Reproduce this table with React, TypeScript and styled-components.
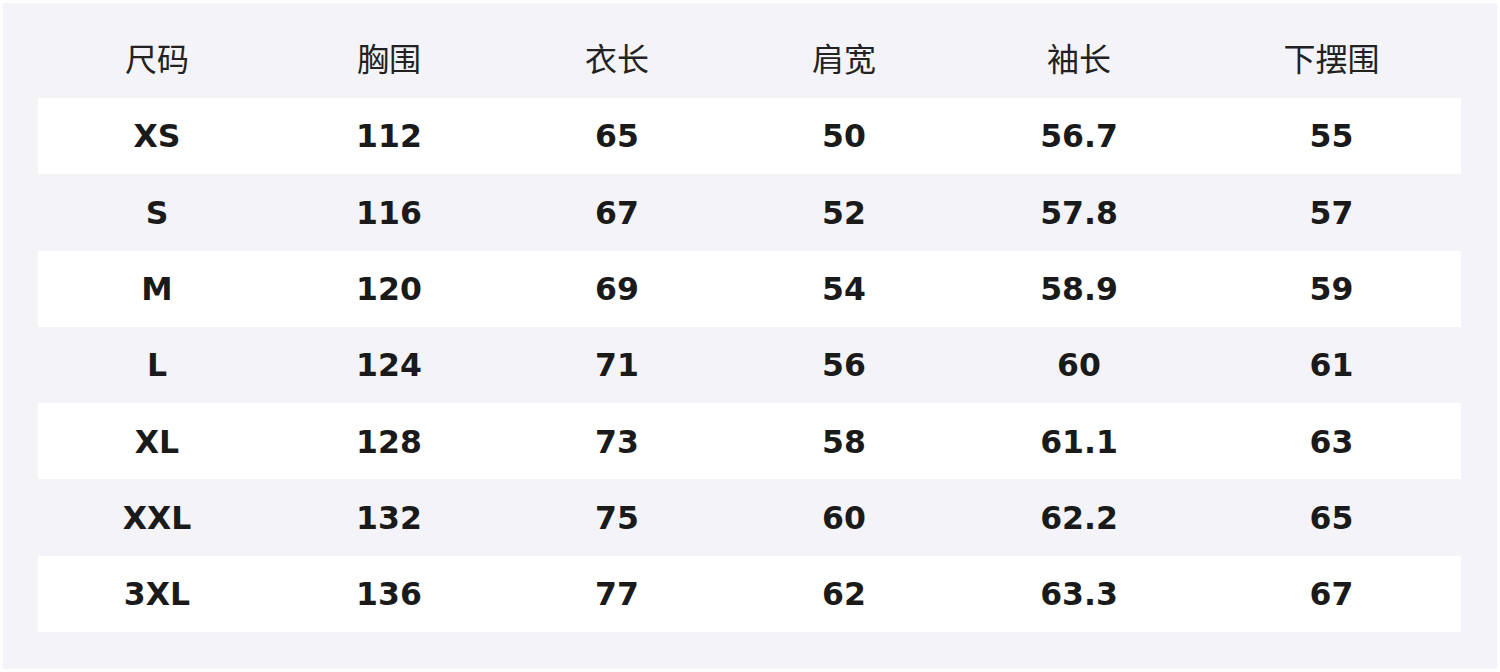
import React from 'react'
import styled, { createGlobalStyle } from 'styled-components'

const headers = ['尺码', '胸围', '衣长', '肩宽', '袖长', '下摆围']

const rows = [
    ['XS', '112', '65', '50', '56.7', '55'],
    ['S', '116', '67', '52', '57.8', '57'],
    ['M', '120', '69', '54', '58.9', '59'],
    ['L', '124', '71', '56', '60', '61'],
    ['XL', '128', '73', '58', '61.1', '63'],
    ['XXL', '132', '75', '60', '62.2', '65'],
    ['3XL', '136', '77', '62', '63.3', '67'],
]

export default function App() {
    return (
        <>
            <GlobalStyle />
            <Page>
                <Panel>
                    <HeadRow>
                        {headers.map(h => (
                            <HeadCell key={h}>{h}</HeadCell>
                        ))}
                    </HeadRow>
                    {rows.map((r, i) => (
                        <Row key={r[0]} $striped={i % 2 === 0}>
                            {r.map((v, j) => (
                                <Cell key={j}>{v}</Cell>
                            ))}
                        </Row>
                    ))}
                </Panel>
            </Page>
        </>
    )
}

const GlobalStyle = createGlobalStyle`
    html, body {
        margin: 0;
        padding: 0;
        background: #fdfdfe;
    }
`

const Page = styled.div`
    width: 1500px;
    height: 672px;
    padding: 3px;
    box-sizing: border-box;
`

const Panel = styled.div`
    height: 100%;
    box-sizing: border-box;
    background: #f3f3f8;
    padding: 19px 36px 37px 35px;
    display: flex;
    flex-direction: column;
`

const columns = '238fr 226fr 230fr 224fr 246fr 259fr'

const HeadRow = styled.div`
    display: grid;
    grid-template-columns: ${columns};
    height: 76px;
    align-items: center;
`

const HeadCell = styled.div`
    text-align: center;
    font-family: 'Noto Sans CJK SC', 'Noto Sans', sans-serif;
    font-size: 32px;
    color: #222;
    line-height: 1;
    padding-bottom: 6px;
`

const Row = styled.div<{ $striped: boolean }>`
    display: grid;
    grid-template-columns: ${columns};
    height: 76.3px;
    align-items: center;
    background: ${p => (p.$striped ? '#ffffff' : 'transparent')};
`

const Cell = styled.div`
    text-align: center;
    font-family: 'DejaVu Sans', sans-serif;
    font-weight: bold;
    font-size: 31.5px;
    color: #1a1a1a;
    line-height: 1;
    padding-top: 2px;
`
